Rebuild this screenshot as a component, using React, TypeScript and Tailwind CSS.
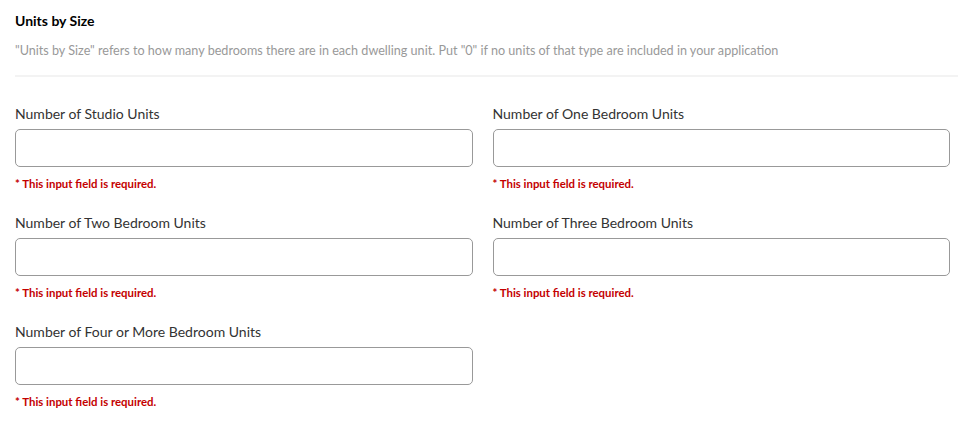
const fields = [
  "Number of Studio Units",
  "Number of One Bedroom Units",
  "Number of Two Bedroom Units",
  "Number of Three Bedroom Units",
  "Number of Four or More Bedroom Units",
];

function Field({ label }: { label: string }) {
  return (
    <div className="flex flex-col">
      <label className="text-[14px] leading-[20px] text-[#333]">{label}</label>
      <input
        type="text"
        className="mt-[5px] h-[38px] w-full rounded-[5px] border border-[#999] bg-white px-3 outline-none"
      />
      <p className="mt-[10px] text-[11.4px] font-bold leading-[14px] text-[#c40000]">
        * This input field is required.
      </p>
    </div>
  );
}

export default function App() {
  return (
    <div
      className="min-h-screen bg-white pl-[15px] pr-[2px] pt-[12px]"
      style={{ fontFamily: "Lato, 'Open Sans', sans-serif" }}
    >
      <h2 className="text-[14px] font-bold leading-[18px] text-black">Units by Size</h2>
      <p className="mt-[12px] text-[12.6px] leading-[18px] text-[#999]">
        "Units by Size" refers to how many bedrooms there are in each dwelling unit. Put "0" if no
        units of that type are included in your application
      </p>
      <div className="mt-[15px] h-[2px] bg-[#f3f3f3]" />
      <div className="mt-[27px] grid w-[935px] grid-cols-2 gap-x-[20px] gap-y-[22px]">
        {fields.map((f) => (
          <Field key={f} label={f} />
        ))}
      </div>
    </div>
  );
}
